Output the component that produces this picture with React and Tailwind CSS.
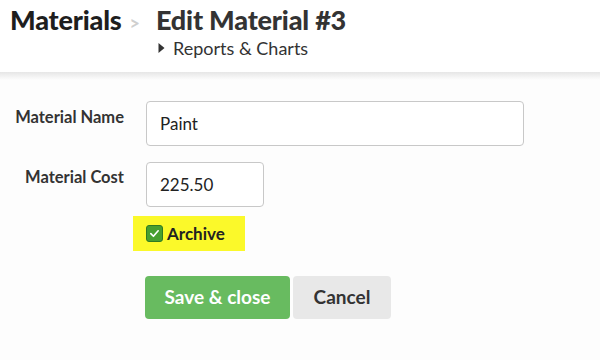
export default function App() {
  return (
    <div className="w-[600px] h-[360px] overflow-hidden bg-[#fdfdfd] text-[#2b2b2b]" style={{ fontFamily: "Lato, 'Open Sans', sans-serif" }}>
      <header className="bg-white h-[72px] pl-[10px] pt-[6px]">
        <div className="flex items-baseline leading-none">
          <span className="text-[27px] font-black tracking-[-0.2px] text-[#1e1e1e]">Materials</span>
          <span className="ml-[8px] mr-[16px] text-[18px] font-bold text-[#cfcfcf]">&gt;</span>
          <span className="text-[27px] font-black tracking-[-0.2px] text-[#333]">Edit Material #3</span>
        </div>
        <div className="flex items-center ml-[148px] mt-[6px] text-[18px] text-[#333] leading-none">
          <svg width="7" height="10" viewBox="0 0 7 10" className="mr-[8px]">
            <path d="M0.5 0 L6.5 5 L0.5 10 Z" fill="#333" />
          </svg>
          Reports &amp; Charts
        </div>
      </header>
      <div className="h-[8px] bg-gradient-to-b from-[#e6e6e6] to-[#fdfdfd]" />

      <div className="pt-[21px]">
        <div className="flex items-start">
          <label className="w-[124px] text-right text-[16.5px] font-bold text-[#333] pt-[4px]">Material Name</label>
          <input
            readOnly
            value="Paint"
            className="ml-[22px] w-[378px] h-[45px] rounded-[4px] border border-[#c8c8c8] bg-white px-[13px] text-[17px] text-[#222] outline-none"
          />
        </div>
        <div className="flex items-start mt-[16px]">
          <label className="w-[124px] text-right text-[16.5px] font-bold text-[#333] pt-[3px]">Material Cost</label>
          <input
            readOnly
            value="225.50"
            className="ml-[22px] w-[118px] h-[45px] rounded-[4px] border border-[#c8c8c8] bg-white px-[13px] text-[17px] text-[#222] outline-none"
          />
        </div>
        <div className="ml-[133px] mt-[9px] w-[112px] h-[35px] bg-[#fbf92a] flex items-center pl-[13px]">
          <span className="w-[17px] h-[17px] rounded-[3px] bg-[#479f2f] border border-[#2f7a22] flex items-center justify-center">
            <svg width="11" height="11" viewBox="0 0 12 12">
              <path d="M2 6.2 L4.8 9 L10 3" stroke="white" strokeWidth="1.8" fill="none" strokeLinecap="round" strokeLinejoin="round" />
            </svg>
          </span>
          <span className="ml-[4px] text-[17px] font-bold text-[#222]">Archive</span>
        </div>
        <div className="flex ml-[145px] mt-[25px] gap-[3px]">
          <button className="w-[145px] h-[43px] rounded-[4px] bg-[#68bb60] text-white text-[19px] font-bold">Save &amp; close</button>
          <button className="w-[98px] h-[43px] rounded-[4px] bg-[#e8e8e8] text-[#333] text-[19px] font-bold">Cancel</button>
        </div>
      </div>
    </div>
  );
}
